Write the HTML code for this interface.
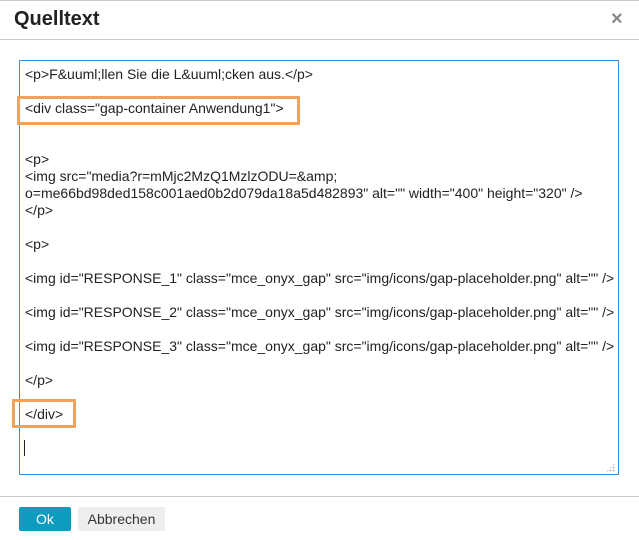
<!DOCTYPE html>
<html><head><meta charset="utf-8"><style>
body{margin:0;width:639px;height:540px;background:#fff;font-family:"Liberation Sans",Arial,sans-serif;position:relative;overflow:hidden;color:#333}
.top{position:absolute;left:0;top:0;width:639px;height:1px;background:#ccc}
.title{position:absolute;left:14px;top:8px;font-size:20px;font-weight:bold;color:#222}
.close{position:absolute;left:611px;top:8px;font-size:20px;color:#888;font-weight:bold}
.hl{position:absolute;left:0;top:39px;width:639px;height:1px;background:#ccc}
.fl{position:absolute;left:0;top:496px;width:639px;height:1px;background:#ccc}
.ta{position:absolute;left:19px;top:60px;width:598px;height:413px;border:1px solid #3b8fd6}
.txt{position:absolute;left:25px;top:66px;font-size:14px;line-height:17px;white-space:pre;color:#222}
.box{position:absolute;border:3px solid #f0a35e}
.cur{position:absolute;left:24px;top:440px;width:1px;height:16px;background:#222}
.grip{position:absolute;left:606px;top:463px;width:9px;height:9px;background:radial-gradient(#bbb 45%,transparent 50%) 0 0/3px 3px;clip-path:polygon(100% 0,100% 100%,0 100%)}
.ok{position:absolute;left:19px;top:507px;width:52px;height:24px;background:#0e9bc0;color:#fff;font-size:14px;line-height:24px;text-align:center;border-radius:2px}
.ab{position:absolute;left:78px;top:507px;width:87px;height:24px;background:#eee;color:#333;font-size:14px;line-height:24px;text-align:center;border-radius:2px}
</style></head><body>
<div class="top"></div>
<div class="title">Quelltext</div>
<div class="close">×</div>
<div class="hl"></div>
<div class="ta"></div>
<div class="txt">&lt;p&gt;F&amp;uuml;llen Sie die L&amp;uuml;cken aus.&lt;/p&gt;

&lt;div class="gap-container Anwendung1"&gt;


&lt;p&gt;
&lt;img src="media?r=mMjc2MzQ1MzlzODU=&amp;amp;
o=me66bd98ded158c001aed0b2d079da18a5d482893" alt="" width="400" height="320" /&gt;
&lt;/p&gt;

&lt;p&gt;

&lt;img id="RESPONSE_1" class="mce_onyx_gap" src="img/icons/gap-placeholder.png" alt="" /&gt;

&lt;img id="RESPONSE_2" class="mce_onyx_gap" src="img/icons/gap-placeholder.png" alt="" /&gt;

&lt;img id="RESPONSE_3" class="mce_onyx_gap" src="img/icons/gap-placeholder.png" alt="" /&gt;

&lt;/p&gt;

&lt;/div&gt;</div>
<div class="box" style="left:17px;top:96px;width:277px;height:23px"></div>
<div class="box" style="left:12px;top:399px;width:58px;height:23px"></div>
<div class="cur"></div>
<div class="grip"></div>
<div class="fl"></div>
<div class="ok">Ok</div>
<div class="ab">Abbrechen</div>
</body></html>
